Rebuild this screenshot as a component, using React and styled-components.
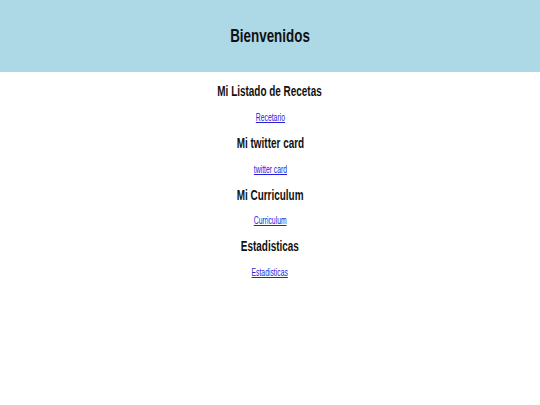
import React from "react";
import styled, { createGlobalStyle } from "styled-components";

const GlobalStyle = createGlobalStyle`
  html, body {
    margin: 0;
    padding: 0;
    background: #ffffff;
    font-family: "Liberation Sans", Arial, sans-serif;
  }
`;

const sections = [
  { title: "Mi Listado de Recetas", link: "Recetario" },
  { title: "Mi twitter card", link: "twitter card" },
  { title: "Mi Curriculum", link: "Curriculum" },
  { title: "Estadisticas", link: "Estadisticas" },
];

const App = () => {
  return (
    <>
      <GlobalStyle />
      <Page>
        <Header>
          <HeaderTitle>Bienvenidos</HeaderTitle>
        </Header>
        <Main>
          {sections.map((s) => (
            <Section key={s.title}>
              <SectionTitle>{s.title}</SectionTitle>
              <LinkRow>
                <Link href="#">{s.link}</Link>
              </LinkRow>
            </Section>
          ))}
        </Main>
      </Page>
    </>
  );
};

const Page = styled.div`
  width: 540px;
  min-height: 405px;
  background: #ffffff;
`;

const Header = styled.header`
  height: 72px;
  background: #add8e6;
  display: flex;
  justify-content: center;
  align-items: center;
`;

const HeaderTitle = styled.h1`
  margin: 0;
  font-size: 18.5px;
  font-weight: bold;
  color: #111;
  transform: scaleX(0.725);
`;

const Main = styled.main`
  display: flex;
  flex-direction: column;
  align-items: center;
  padding-top: 7px;
`;

const Section = styled.section`
  display: flex;
  flex-direction: column;
  align-items: center;
`;

const SectionTitle = styled.h2`
  margin: 0;
  height: 25.9px;
  line-height: 25.9px;
  font-size: 14px;
  font-weight: bold;
  color: #111;
  transform: scaleX(0.71);
`;

const LinkRow = styled.p`
  margin: 0;
  height: 25.9px;
  line-height: 25.9px;
  font-size: 10px;
  transform: scaleX(0.68);
`;

const Link = styled.a`
  color: #2222dd;
  text-decoration: underline;
`;

export default App;
